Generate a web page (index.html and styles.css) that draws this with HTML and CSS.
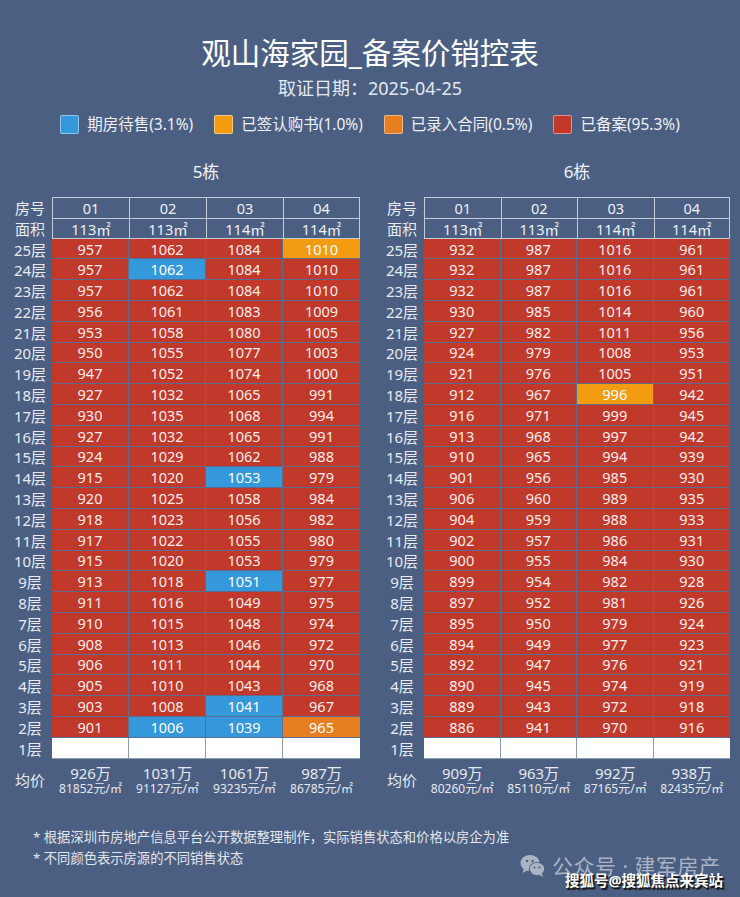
FILE: index.html
```html
<!DOCTYPE html>
<html lang="zh-CN">
<head>
<meta charset="utf-8">
<title>观山海家园_备案价销控表</title>
<link rel="stylesheet" href="styles.css">
</head>
<body>
<div class="page">
  <h1 class="title">观山海家园_备案价销控表</h1>
  <div class="subtitle">取证日期：2025-04-25</div>
  <div class="legend">
    <div class="item"><span class="sw b"></span>期房待售(3.1%)</div>
    <div class="item"><span class="sw o"></span>已签认购书(1.0%)</div>
    <div class="item"><span class="sw d"></span>已录入合同(0.5%)</div>
    <div class="item"><span class="sw r"></span>已备案(95.3%)</div>
  </div>

  <div class="buildings">
    <section class="bld left">
      <div class="bname">5栋</div>
      <div class="grid">
        <div class="lab">房号</div><div class="h">01</div><div class="h">02</div><div class="h">03</div><div class="h">04</div>
        <div class="lab">面积</div><div class="h h2">113㎡</div><div class="h h2">113㎡</div><div class="h h2">114㎡</div><div class="h h2">114㎡</div>
        <div class="lab">25层</div><div class="c">957</div><div class="c">1062</div><div class="c">1084</div><div class="c o">1010</div>
        <div class="lab">24层</div><div class="c">957</div><div class="c b">1062</div><div class="c">1084</div><div class="c">1010</div>
        <div class="lab">23层</div><div class="c">957</div><div class="c">1062</div><div class="c">1084</div><div class="c">1010</div>
        <div class="lab">22层</div><div class="c">956</div><div class="c">1061</div><div class="c">1083</div><div class="c">1009</div>
        <div class="lab">21层</div><div class="c">953</div><div class="c">1058</div><div class="c">1080</div><div class="c">1005</div>
        <div class="lab">20层</div><div class="c">950</div><div class="c">1055</div><div class="c">1077</div><div class="c">1003</div>
        <div class="lab">19层</div><div class="c">947</div><div class="c">1052</div><div class="c">1074</div><div class="c">1000</div>
        <div class="lab">18层</div><div class="c">927</div><div class="c">1032</div><div class="c">1065</div><div class="c">991</div>
        <div class="lab">17层</div><div class="c">930</div><div class="c">1035</div><div class="c">1068</div><div class="c">994</div>
        <div class="lab">16层</div><div class="c">927</div><div class="c">1032</div><div class="c">1065</div><div class="c">991</div>
        <div class="lab">15层</div><div class="c">924</div><div class="c">1029</div><div class="c">1062</div><div class="c">988</div>
        <div class="lab">14层</div><div class="c">915</div><div class="c">1020</div><div class="c b">1053</div><div class="c">979</div>
        <div class="lab">13层</div><div class="c">920</div><div class="c">1025</div><div class="c">1058</div><div class="c">984</div>
        <div class="lab">12层</div><div class="c">918</div><div class="c">1023</div><div class="c">1056</div><div class="c">982</div>
        <div class="lab">11层</div><div class="c">917</div><div class="c">1022</div><div class="c">1055</div><div class="c">980</div>
        <div class="lab">10层</div><div class="c">915</div><div class="c">1020</div><div class="c">1053</div><div class="c">979</div>
        <div class="lab">9层</div><div class="c">913</div><div class="c">1018</div><div class="c b">1051</div><div class="c">977</div>
        <div class="lab">8层</div><div class="c">911</div><div class="c">1016</div><div class="c">1049</div><div class="c">975</div>
        <div class="lab">7层</div><div class="c">910</div><div class="c">1015</div><div class="c">1048</div><div class="c">974</div>
        <div class="lab">6层</div><div class="c">908</div><div class="c">1013</div><div class="c">1046</div><div class="c">972</div>
        <div class="lab">5层</div><div class="c">906</div><div class="c">1011</div><div class="c">1044</div><div class="c">970</div>
        <div class="lab">4层</div><div class="c">905</div><div class="c">1010</div><div class="c">1043</div><div class="c">968</div>
        <div class="lab">3层</div><div class="c">903</div><div class="c">1008</div><div class="c b">1041</div><div class="c">967</div>
        <div class="lab">2层</div><div class="c">901</div><div class="c b">1006</div><div class="c b">1039</div><div class="c d">965</div>
        <div class="lab">1层</div><div class="c w"></div><div class="c w"></div><div class="c w"></div><div class="c w"></div>
      </div>
      <div class="avg">
        <div class="alab">均价</div>
        <div class="av"><span class="tot">926万</span><span class="unit">81852元/㎡</span></div>
        <div class="av"><span class="tot">1031万</span><span class="unit">91127元/㎡</span></div>
        <div class="av"><span class="tot">1061万</span><span class="unit">93235元/㎡</span></div>
        <div class="av"><span class="tot">987万</span><span class="unit">86785元/㎡</span></div>
      </div>
    </section>

    <section class="bld right">
      <div class="bname">6栋</div>
      <div class="grid">
        <div class="lab">房号</div><div class="h">01</div><div class="h">02</div><div class="h">03</div><div class="h">04</div>
        <div class="lab">面积</div><div class="h h2">113㎡</div><div class="h h2">113㎡</div><div class="h h2">114㎡</div><div class="h h2">114㎡</div>
        <div class="lab">25层</div><div class="c">932</div><div class="c">987</div><div class="c">1016</div><div class="c">961</div>
        <div class="lab">24层</div><div class="c">932</div><div class="c">987</div><div class="c">1016</div><div class="c">961</div>
        <div class="lab">23层</div><div class="c">932</div><div class="c">987</div><div class="c">1016</div><div class="c">961</div>
        <div class="lab">22层</div><div class="c">930</div><div class="c">985</div><div class="c">1014</div><div class="c">960</div>
        <div class="lab">21层</div><div class="c">927</div><div class="c">982</div><div class="c">1011</div><div class="c">956</div>
        <div class="lab">20层</div><div class="c">924</div><div class="c">979</div><div class="c">1008</div><div class="c">953</div>
        <div class="lab">19层</div><div class="c">921</div><div class="c">976</div><div class="c">1005</div><div class="c">951</div>
        <div class="lab">18层</div><div class="c">912</div><div class="c">967</div><div class="c o">996</div><div class="c">942</div>
        <div class="lab">17层</div><div class="c">916</div><div class="c">971</div><div class="c">999</div><div class="c">945</div>
        <div class="lab">16层</div><div class="c">913</div><div class="c">968</div><div class="c">997</div><div class="c">942</div>
        <div class="lab">15层</div><div class="c">910</div><div class="c">965</div><div class="c">994</div><div class="c">939</div>
        <div class="lab">14层</div><div class="c">901</div><div class="c">956</div><div class="c">985</div><div class="c">930</div>
        <div class="lab">13层</div><div class="c">906</div><div class="c">960</div><div class="c">989</div><div class="c">935</div>
        <div class="lab">12层</div><div class="c">904</div><div class="c">959</div><div class="c">988</div><div class="c">933</div>
        <div class="lab">11层</div><div class="c">902</div><div class="c">957</div><div class="c">986</div><div class="c">931</div>
        <div class="lab">10层</div><div class="c">900</div><div class="c">955</div><div class="c">984</div><div class="c">930</div>
        <div class="lab">9层</div><div class="c">899</div><div class="c">954</div><div class="c">982</div><div class="c">928</div>
        <div class="lab">8层</div><div class="c">897</div><div class="c">952</div><div class="c">981</div><div class="c">926</div>
        <div class="lab">7层</div><div class="c">895</div><div class="c">950</div><div class="c">979</div><div class="c">924</div>
        <div class="lab">6层</div><div class="c">894</div><div class="c">949</div><div class="c">977</div><div class="c">923</div>
        <div class="lab">5层</div><div class="c">892</div><div class="c">947</div><div class="c">976</div><div class="c">921</div>
        <div class="lab">4层</div><div class="c">890</div><div class="c">945</div><div class="c">974</div><div class="c">919</div>
        <div class="lab">3层</div><div class="c">889</div><div class="c">943</div><div class="c">972</div><div class="c">918</div>
        <div class="lab">2层</div><div class="c">886</div><div class="c">941</div><div class="c">970</div><div class="c">916</div>
        <div class="lab">1层</div><div class="c w"></div><div class="c w"></div><div class="c w"></div><div class="c w"></div>
      </div>
      <div class="avg">
        <div class="alab">均价</div>
        <div class="av"><span class="tot">909万</span><span class="unit">80260元/㎡</span></div>
        <div class="av"><span class="tot">963万</span><span class="unit">85110元/㎡</span></div>
        <div class="av"><span class="tot">992万</span><span class="unit">87165元/㎡</span></div>
        <div class="av"><span class="tot">938万</span><span class="unit">82435元/㎡</span></div>
      </div>
    </section>
  </div>

  <div class="notes">
    <p>* 根据深圳市房地产信息平台公开数据整理制作，实际销售状态和价格以房企为准</p>
    <p>* 不同颜色表示房源的不同销售状态</p>
  </div>

  <div class="wm">
    <svg class="wx" viewBox="0 0 26 24" width="26" height="24" aria-hidden="true">
      <ellipse cx="10" cy="9" rx="9.5" ry="8" fill="#a9b3c3"/>
      <path d="M4 14.5 L2.5 19 L8 16 Z" fill="#a9b3c3"/>
      <ellipse cx="17" cy="15" rx="8.2" ry="7" fill="#4b5f83"/>
      <ellipse cx="17" cy="15" rx="7.2" ry="6.2" fill="#a9b3c3"/>
      <path d="M21.5 19.5 L23.5 23 L18.5 20.8 Z" fill="#a9b3c3"/>
      <circle cx="7" cy="7" r="1.2" fill="#4b5f83"/>
      <circle cx="12.5" cy="7" r="1.2" fill="#4b5f83"/>
      <circle cx="14.5" cy="13.5" r="1" fill="#4b5f83"/>
      <circle cx="19.5" cy="13.5" r="1" fill="#4b5f83"/>
    </svg>
    <span class="wmtext">公众号 · 建军房产</span>
  </div>
  <div class="sohu">搜狐号@搜狐焦点来宾站</div>
</div>
</body>
</html>
```

FILE: styles.css
```css
* { box-sizing: border-box; }
html, body { margin: 0; padding: 0; }
body {
  background: #4b5f83;
  font-family: "Noto Sans", "Noto Sans CJK SC", sans-serif;
  color: #ffffff;
}
.page {
  position: relative;
  width: 740px;
  height: 897px;
  overflow: hidden;
  padding-top: 35px;
}
.title {
  margin: 0;
  font-size: 29.5px;
  font-weight: 400;
  line-height: 36px;
  text-align: center;
  color: #ffffff;
}
.subtitle {
  margin-top: 5px;
  font-size: 18px;
  line-height: 24px;
  text-align: center;
  color: #e4e8ef;
}
.legend {
  margin-top: 13px;
  display: flex;
  justify-content: center;
  gap: 21px;
  height: 22px;
  font-size: 15.5px;
  line-height: 22px;
  color: #eef0f4;
}
.legend .item {
  display: flex;
  align-items: center;
  gap: 8px;
}
.sw {
  display: inline-block;
  width: 19px;
  height: 19px;
  border-radius: 2px;
  border: 1px solid rgba(255,255,255,0.45);
}
.sw.b, .c.b { background: #3498db; }
.sw.o, .c.o { background: #f39c12; }
.sw.d, .c.d { background: #e67e22; }
.sw.r { background: #c0392b; }

.buildings {
  margin-top: 25px;
  padding-left: 8px;
  display: flex;
  gap: 20px;
}
.bld.left { width: 352px; }
.bld.right { width: 350px; }
.bname {
  margin-left: 44px;
  font-size: 17px;
  line-height: 24px;
  text-align: center;
  color: #f2f4f7;
}
.grid {
  margin-top: 13px;
  display: grid;
  grid-template-columns: 44px repeat(4, 1fr);
  grid-auto-rows: 20.8px;
}
.lab, .alab {
  display: flex;
  align-items: center;
  justify-content: center;
  font-size: 15px;
  color: #e8ebf0;
}
.h {
  display: flex;
  align-items: center;
  justify-content: center;
  font-size: 14.5px;
  color: #eef1f5;
  border-top: 1px solid #c3cbd8;
  border-left: 1px solid #c3cbd8;
}
.h:nth-child(5n) { border-right: 1px solid #c3cbd8; }
.h.h2 { border-bottom: 1px solid #c3cbd8; }
.c {
  display: flex;
  align-items: center;
  justify-content: center;
  font-size: 14.5px;
  color: #fbeeed;
  background: #c0392b;
  border-right: 1px solid #5a6d90;
  border-bottom: 1px solid #5a6d90;
}
.c:nth-child(5n) { border-right: 0; }
.c.b, .c.o, .c.d { color: #ffffff; }
.c.w { background: #ffffff; border-color: #8d9bb3; }

.avg {
  margin-top: 5px;
  display: grid;
  grid-template-columns: 44px repeat(4, 1fr);
}
.av {
  display: flex;
  flex-direction: column;
  align-items: center;
  color: #e6e9ef;
}
.tot { font-size: 15px; line-height: 18px; }
.unit { font-size: 12px; line-height: 14px; }

.notes {
  margin-top: 31px;
  padding-left: 33px;
  font-size: 13.3px;
  line-height: 21px;
  color: #e2e6ed;
}
.notes p { margin: 0; }

.wm {
  position: absolute;
  left: 520px;
  top: 852px;
  display: flex;
  align-items: center;
  gap: 6px;
}
.wmtext {
  font-size: 21px;
  line-height: 28px;
  color: #a9b3c3;
  letter-spacing: 0.5px;
}
.sohu {
  position: absolute;
  left: 565px;
  top: 870px;
  font-size: 14.5px;
  line-height: 20px;
  font-weight: 700;
  color: #ffffff;
  text-shadow: 1.5px 1.5px 0 #1a1a1a, 2px 2px 1px #222;
}
```
